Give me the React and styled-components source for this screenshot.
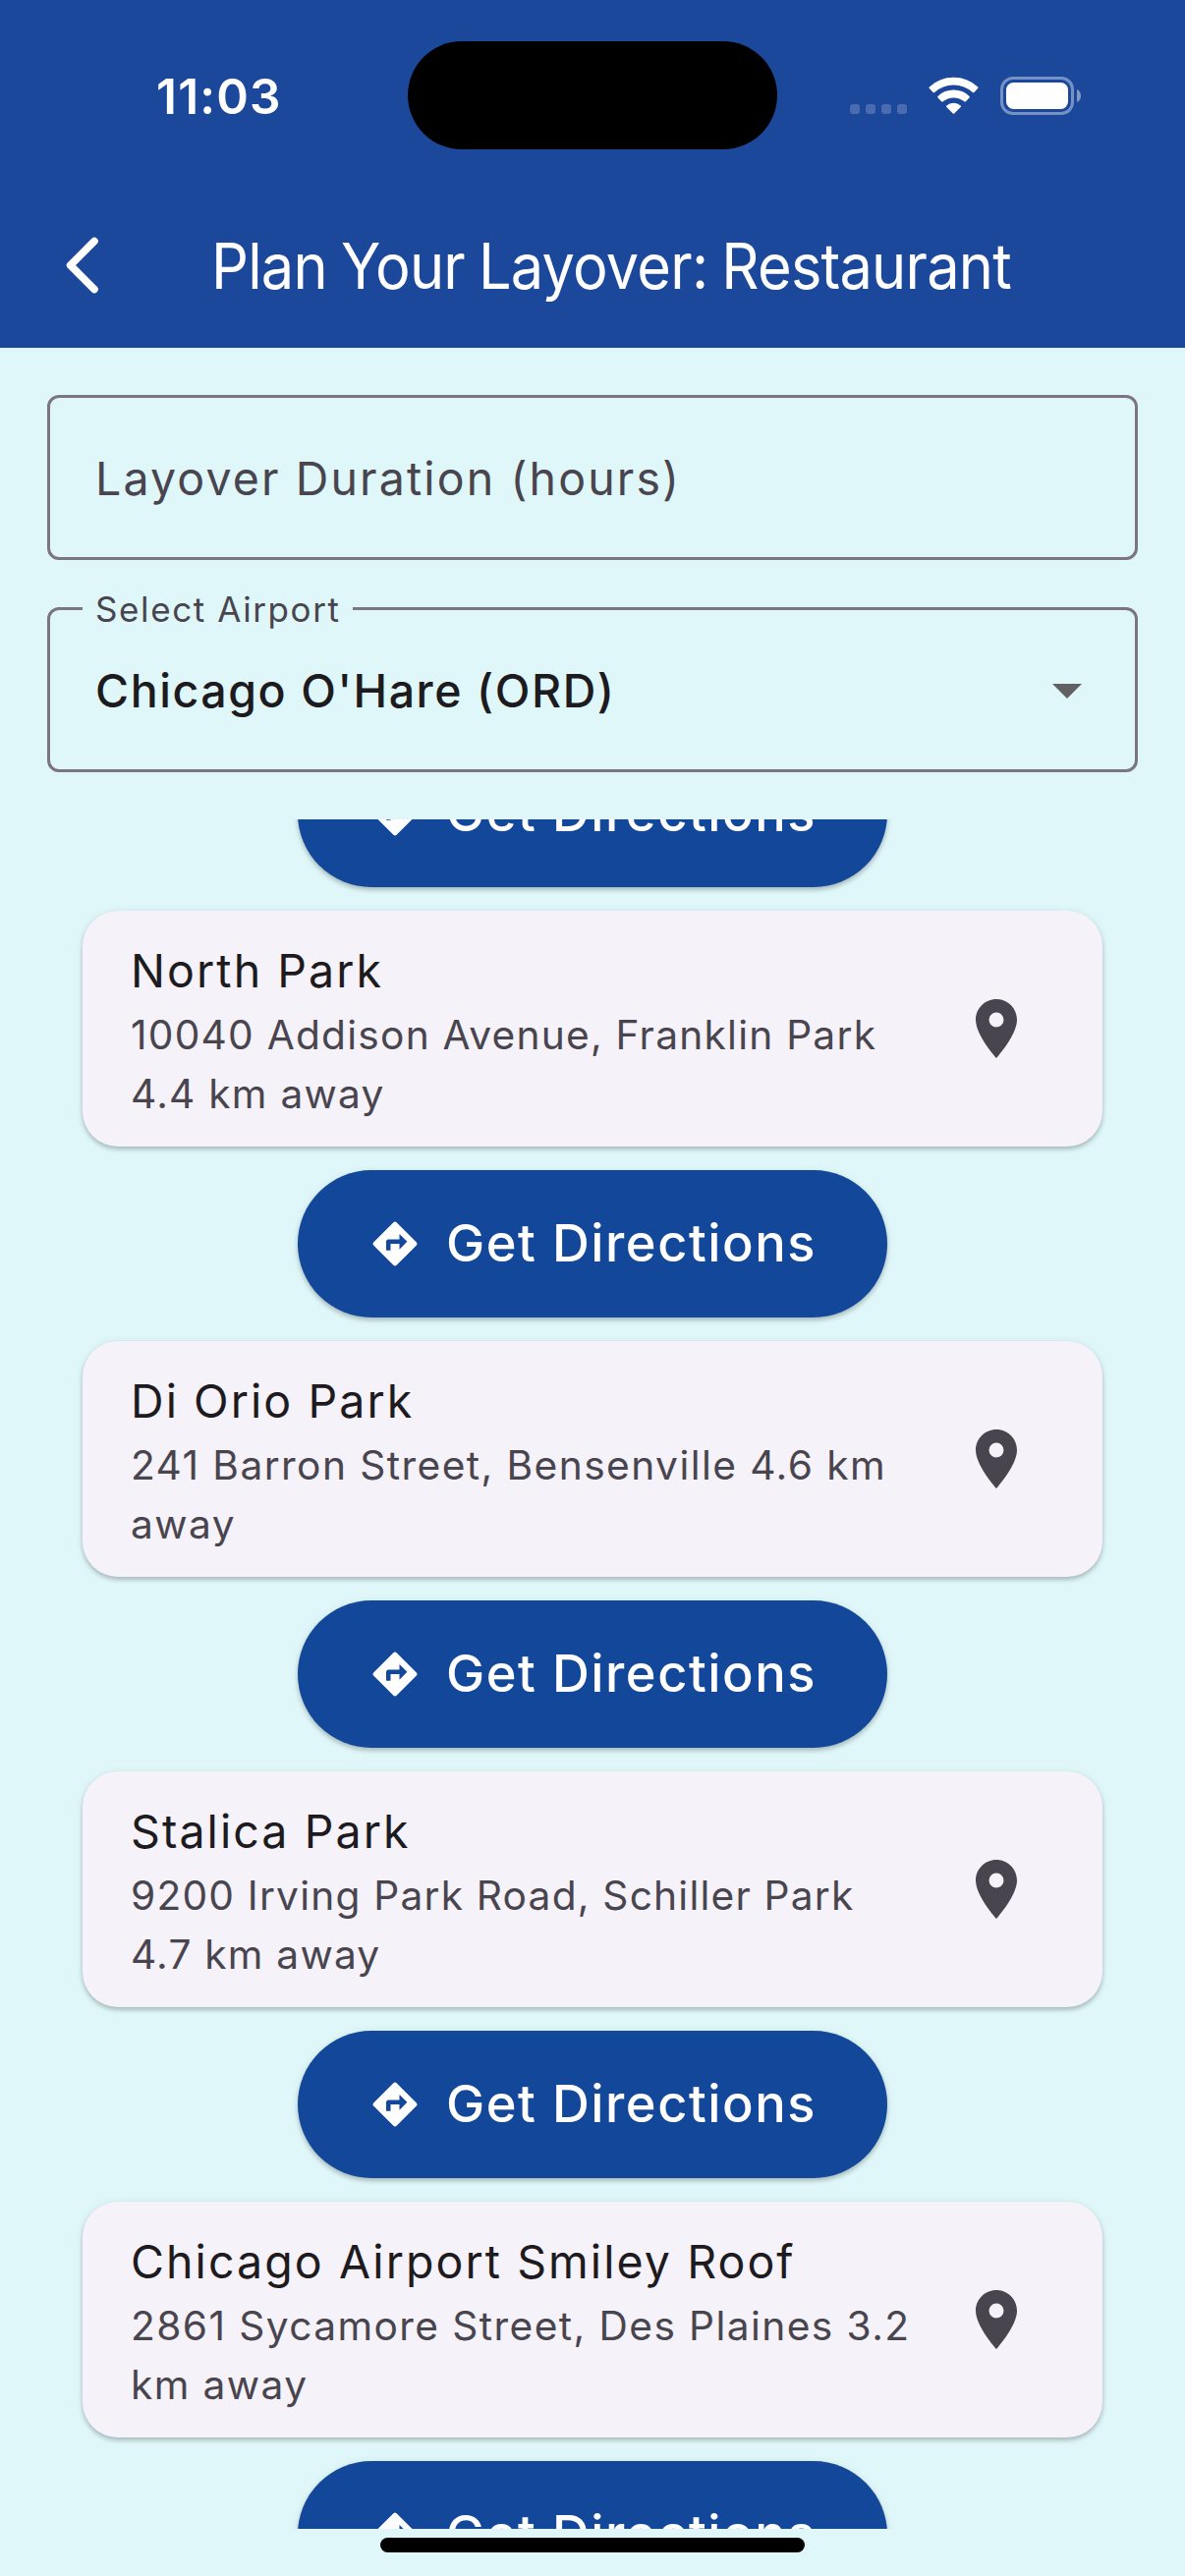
import React from "react";
import styled, { createGlobalStyle } from "styled-components";

const GlobalStyle = createGlobalStyle`
  *, *::before, *::after { box-sizing: border-box; }
  html, body { margin: 0; padding: 0; background: #dff7f9; }
`;

const Screen = styled.div`
  width: 1206px;
  height: 2622px;
  display: flex;
  flex-direction: column;
  overflow: hidden;
  background: #dff7f9;
  font-family: Inter, Roboto, sans-serif;
`;

const Header = styled.header`
  flex: none;
  height: 354px;
  background: #1b489b;
  color: #fff;
`;

const StatusBar = styled.div`
  height: 186px;
  padding-top: 42px;
  display: grid;
  grid-template-columns: 415px 376px 415px;
  grid-template-rows: 110px;
  align-items: center;
`;

const Clock = styled.span`
  padding: 2px 0 0 159px;
  font-size: 49.5px;
  font-weight: 600;
  line-height: 60px;
  letter-spacing: 1.2px;
`;

const Island = styled.div`
  height: 110px;
  border-radius: 55px;
  background: #000;
`;

const StatusIcons = styled.div`
  display: flex;
  align-items: center;
  gap: 22px;
  padding: 1px 0 0 74px;

  svg {
    display: block;
    flex: none;
  }
`;

const AppBar = styled.div`
  height: 168px;
  display: flex;
  align-items: center;
`;

const BackButton = styled.button`
  flex: none;
  width: 215px;
  height: 168px;
  padding: 0 0 0 48px;
  border: 0;
  background: none;
  display: flex;
  align-items: center;

  svg {
    display: block;
  }
`;

const Title = styled.h1`
  margin: 0;
  padding-top: 2px;
  font-size: 64px;
  font-weight: 400;
  line-height: 84px;
  letter-spacing: -0.85px;
  word-spacing: -2px;
  white-space: nowrap;
  transform: scaleX(0.93);
  transform-origin: left center;
`;

const Form = styled.div`
  flex: none;
  display: flex;
  flex-direction: column;
  gap: 48px;
  padding: 48px;
`;

const Field = styled.div`
  position: relative;
  height: 168px;
  border: 3px solid #7a757f;
  border-radius: 12px;
  padding: 0 45px 0 46px;
  display: flex;
  align-items: center;
  justify-content: space-between;
  font-size: 46.5px;
  line-height: 72px;
  color: #49454f;
`;

const Placeholder = styled.span`
  letter-spacing: 2.12px;
  padding-top: 2px;
`;

const FloatingLabel = styled.span`
  position: absolute;
  top: -25px;
  left: 33px;
  width: 275px;
  padding-left: 13px;
  background: #dff7f9;
  font-size: 35px;
  line-height: 48px;
  letter-spacing: 1.6px;
`;

const Value = styled.span`
  font-weight: 500;
  letter-spacing: 1.55px;
  color: #1d1b20;
  padding-top: 1px;
`;

const Caret = styled.span`
  width: 0;
  height: 0;
  margin: 2px 9px 0 0;
  border: 15px solid transparent;
  border-top-color: #616161;
  border-bottom: 0;
`;

const List = styled.main`
  flex: none;
  height: 1740px;
  overflow: hidden;
`;

const Scrolled = styled.div`
  display: flex;
  flex-direction: column;
  align-items: center;
  gap: 24px;
  margin-top: -80.6px;
`;

const Card = styled.article`
  flex: none;
  width: 1038px;
  height: 240px;
  border-radius: 36px;
  padding: 26px 72px 0 49px;
  display: flex;
  justify-content: space-between;
  background: #f6f2f9;
  box-shadow: 0 3px 4px rgba(0, 0, 0, 0.2), 0 1px 8px rgba(0, 0, 0, 0.08);
`;

const CardText = styled.div`
  width: 798px;
`;

const CardTitle = styled.h2`
  margin: 0;
  font-size: 46.5px;
  font-weight: 400;
  line-height: 71px;
  letter-spacing: 2.07px;
  color: #1d1b20;
`;

const CardAddress = styled.p`
  margin: 0;
  font-size: 40.7px;
  line-height: 60px;
  letter-spacing: ${(p) => p.$tracking}px;
  color: #49454f;
`;

const Pin = styled.svg`
  display: block;
  flex: none;
  margin-top: 58px;
  fill: #49454f;
`;

const DirectionsButton = styled.button`
  flex: none;
  width: 600px;
  height: 150px;
  padding: 0 0 0 72px;
  border: 0;
  border-radius: 75px;
  display: flex;
  align-items: center;
  gap: 25px;
  background: #13479a;
  box-shadow: 0 3px 4px rgba(0, 0, 0, 0.2), 0 1px 8px rgba(0, 0, 0, 0.08);
  color: #fff;
  font-family: inherit;
  font-size: 52.4px;
  font-weight: 500;
  line-height: 72px;
  letter-spacing: 1.55px;
  white-space: nowrap;

  svg {
    display: block;
    fill: #fff;
  }

  span {
    padding-bottom: 2px;
  }
`;

const Footer = styled.footer`
  height: 48px;
  padding-top: 9px;
  display: flex;
  justify-content: center;
`;

const HomeIndicator = styled.div`
  width: 432px;
  height: 15px;
  border-radius: 7.5px;
  background: #000;
`;

const places = [
  { name: "North Park", address: "10040 Addison Avenue, Franklin Park 4.4 km away", tracking: 1.23 },
  { name: "Di Orio Park", address: "241 Barron Street, Bensenville 4.6 km away", tracking: 1.42 },
  { name: "Stalica Park", address: "9200 Irving Park Road, Schiller Park 4.7 km away", tracking: 1.2 },
  { name: "Chicago Airport Smiley Roof", address: "2861 Sycamore Street, Des Plaines 3.2 km away", tracking: 1.4 },
];

function Directions() {
  return (
    <DirectionsButton type="button">
      <svg width="54" height="54" viewBox="0 0 24 24">
        <path d="M21.71 11.29l-9-9c-.39-.39-1.02-.39-1.41 0l-9 9c-.39.39-.39 1.02 0 1.41l9 9c.39.39 1.02.39 1.41 0l9-9c.39-.38.39-1.01 0-1.41zM14 14.5V12h-4v3H8v-4c0-.55.45-1 1-1h5V7.5l3.5 3.5-3.5 3.5z" />
      </svg>
      <span>Get Directions</span>
    </DirectionsButton>
  );
}

export default function App() {
  return (
    <>
      <GlobalStyle />
      <Screen>
        <Header>
          <StatusBar>
            <Clock>11:03</Clock>
            <Island />
            <StatusIcons>
              <svg width="58" height="39" viewBox="0 0 58 39">
                {[0, 16, 32, 48].map((x) => (
                  <rect key={x} x={x} y="28" width="10" height="10" rx="3" fill="#fff" fillOpacity="0.2" />
                ))}
              </svg>
              <svg width="51" height="39" viewBox="0 0 51 39" fill="#fff">
                <path d="M.9 12.100Q0 11.300 .8 10.500A36.500 36.500 0 0 1 50.200 10.500Q51 11.300 50.100 12.100L46.400 15.900Q45.700 16.600 44.900 15.900A29 29 0 0 0 6.100 15.900Q5.300 16.600 4.600 15.900Z" />
                <path d="M9.500 21.500Q8.700 20.700 9.500 19.900A23 23 0 0 1 41.500 19.900Q42.300 20.700 41.500 21.500L37.900 25.300Q37.100 26 36.300 25.300A17 17 0 0 0 14.700 25.300Q13.900 26 13.100 25.300Z" />
                <path d="M18.300 30.900Q17.500 30.100 18.300 29.400A11 11 0 0 1 32.700 29.400Q33.500 30.100 32.700 30.900L26.200 37.500Q25.500 38.200 24.800 37.500Z" />
              </svg>
              <svg width="83" height="39" viewBox="0 0 83 39">
                <rect x="1.5" y="1.5" width="72" height="36" rx="11.5" fill="none" stroke="#fff" strokeOpacity="0.4" strokeWidth="3" />
                <rect x="6" y="6" width="63" height="27" rx="7.5" fill="#fff" />
                <path d="M78 13c2.500 1 4 3.400 4 6.500s-1.500 5.500-4 6.500z" fill="#fff" fillOpacity="0.45" />
              </svg>
            </StatusIcons>
          </StatusBar>
          <AppBar>
            <BackButton type="button" aria-label="Back">
              <svg width="72" height="72" viewBox="0 0 72 72">
                <path d="M48 11.500L23.600 36L48 60.500" fill="none" stroke="#fff" strokeWidth="7.6" strokeLinecap="round" strokeLinejoin="round" />
              </svg>
            </BackButton>
            <Title>Plan Your Layover: Restaurant</Title>
          </AppBar>
        </Header>
        <Form>
          <Field>
            <Placeholder>Layover Duration (hours)</Placeholder>
          </Field>
          <Field>
            <FloatingLabel>Select Airport</FloatingLabel>
            <Value>Chicago O'Hare (ORD)</Value>
            <Caret />
          </Field>
        </Form>
        <List>
          <Scrolled>
            <Directions />
            {places.map((p) => (
              <React.Fragment key={p.name}>
                <Card>
                  <CardText>
                    <CardTitle>{p.name}</CardTitle>
                    <CardAddress $tracking={p.tracking}>{p.address}</CardAddress>
                  </CardText>
                  <Pin width="72" height="72" viewBox="0 0 24 24">
                    <path d="M12 2C8.130 2 5 5.130 5 9c0 5.250 7 13 7 13s7-7.750 7-13c0-3.870-3.130-7-7-7zm0 9.500a2.500 2.500 0 0 1 0-5 2.500 2.500 0 0 1 0 5z" />
                  </Pin>
                </Card>
                <Directions />
              </React.Fragment>
            ))}
          </Scrolled>
        </List>
        <Footer>
          <HomeIndicator />
        </Footer>
      </Screen>
    </>
  );
}
